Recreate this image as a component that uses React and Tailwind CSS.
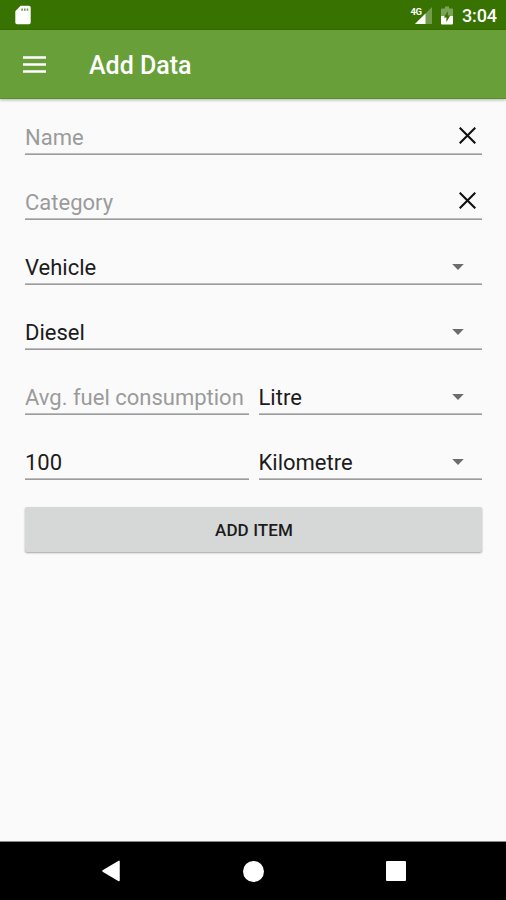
import React from 'react';

const SdCardIcon = () => (
    <svg width="16" height="20" viewBox="0 0 16 20" className="shrink-0">
        <path d="M5.6 0.8H14A1.7 1.7 0 0 1 15.7 2.5V17.5A1.7 1.7 0 0 1 14 19.2H2A1.7 1.7 0 0 1 0.3 17.5V6.2Z" fill="#fff" />
        <path d="M6.3 3.4h1.6v2.4h-1.6zM9 3.4h1.6v2.4H9zM11.7 3.4h1.6v2.4h-1.6z" fill="#6d9548" />
    </svg>
);

const SignalIcon = () => (
    <svg width="24" height="20" viewBox="0 0 24 20" className="shrink-0">
        <path d="M5 19L22 2V19Z" fill="#fff" fillOpacity="0.3" />
        <path d="M5 19L15.5 8.5V19Z" fill="#fff" />
        <text x="0.5" y="9.5" fontSize="9.5" fontWeight="700" fill="#fff" fontFamily="Roboto, sans-serif" letterSpacing="-0.5">4G</text>
    </svg>
);

const BatteryIcon = () => (
    <svg width="12" height="19" viewBox="0 0 12 19" className="shrink-0">
        <path d="M4 0.5h4v2h3a1 1 0 0 1 1 1V10H0V3.5a1 1 0 0 1 1-1h3z" fill="#fff" fillOpacity="0.35" />
        <path d="M0 10h12v7.5a1 1 0 0 1-1 1H1a1 1 0 0 1-1-1z" fill="#fff" />
        <path d="M6.8 5L2.8 11.6H5.4V16.2L9.2 9.6H6.8Z" fill="#3a7300" />
    </svg>
);

const ClearIcon = () => (
    <svg width="17" height="17" viewBox="0 0 17 17" className="mr-[6px] -mt-[5px]">
        <path d="M0.7 0.7L16.3 16.3M16.3 0.7L0.7 16.3" stroke="#111" strokeWidth="2.1" fill="none" />
    </svg>
);

const CaretIcon = () => (
    <svg width="12" height="6" viewBox="0 0 12 6" className="mr-[18px] -mt-px">
        <path d="M0.2 0H11.8L6 6Z" fill="#6c6c6c" />
    </svg>
);

const Field = ({ text, hint, icon }) => (
    <div className="flex h-[45px] min-w-0 flex-1 flex-col">
        <div className="flex flex-1 items-center justify-between pt-3">
            <span
                className={`whitespace-nowrap text-[22px] leading-[26px] ${
                    hint ? 'text-[#9b9b9b]' : 'text-[#1c1c1c]'
                }`}
            >
                {text}
            </span>
            {icon}
        </div>
        <div className="h-[2px] shrink-0 border-t border-[#bdbdbd] bg-[#9c9c9c]" />
    </div>
);

const rows = [
    [{ text: 'Name', hint: true, icon: <ClearIcon /> }],
    [{ text: 'Category', hint: true, icon: <ClearIcon /> }],
    [{ text: 'Vehicle', icon: <CaretIcon /> }],
    [{ text: 'Diesel', icon: <CaretIcon /> }],
    [{ text: 'Avg. fuel consumption', hint: true }, { text: 'Litre', icon: <CaretIcon /> }],
    [{ text: '100' }, { text: 'Kilometre', icon: <CaretIcon /> }],
];

const App = () => {
    return (
        <div className="flex h-[900px] w-[506px] flex-col overflow-hidden bg-[#fafafa] font-['Roboto',sans-serif]">
            {/* Status bar */}
            <div className="flex h-[30px] shrink-0 items-center bg-[#387200] pl-[15px] pr-[9px]">
                <SdCardIcon />
                <div className="ml-auto flex items-center">
                    <SignalIcon />
                    <div className="ml-[7px] flex">
                        <BatteryIcon />
                    </div>
                    <span className="ml-[9px] pt-[2px] text-[18px] font-medium leading-5 tracking-[-0.1px] text-white">3:04</span>
                </div>
            </div>

            {/* Toolbar */}
            <div className="z-10 flex h-[69px] shrink-0 items-center border-b border-[#5a9322] bg-[#689f38] pl-[23px] shadow-[0_1px_3px_rgba(0,0,0,0.3)]">
                <svg width="23" height="17" viewBox="0 0 23 17">
                    <path d="M0 0.2h23v2.6H0zM0 7.2h23v2.6H0zM0 14.2h23v2.6H0z" fill="#fff" />
                </svg>
                <h1 className="ml-[43px] pt-1 text-[25px] font-medium leading-7 text-white">Add Data</h1>
            </div>

            {/* Form */}
            <div className="flex flex-1 flex-col gap-5 pl-[25px] pr-6 pt-[11px]">
                {rows.map((fields, index) => (
                    <div key={index} className="flex gap-[10px]">
                        {fields.map((field) => (
                            <Field key={field.text} {...field} />
                        ))}
                    </div>
                ))}
                <button className="mt-[7px] h-[45px] rounded-[2px] bg-[#d6d7d7] pl-px text-[17px] font-medium leading-5 tracking-[0.1px] text-[#1c1c1c] shadow-[0_1px_2px_rgba(0,0,0,0.35)]">
                    ADD ITEM
                </button>
            </div>

            {/* Navigation bar */}
            <div className="flex h-[59px] shrink-0 items-center justify-between border-t border-[#8a8a8a] bg-black pl-[102px] pr-[100px]">
                <svg width="18" height="22" viewBox="0 0 18 22">
                    <path d="M17 1.4V20.6L1 11Z" fill="#fff" stroke="#fff" strokeWidth="1.5" strokeLinejoin="round" />
                </svg>
                <div className="h-[21px] w-[21px] rounded-full bg-white" />
                <div className="h-5 w-5 rounded-[1px] bg-white" />
            </div>
        </div>
    );
};

export default App;
